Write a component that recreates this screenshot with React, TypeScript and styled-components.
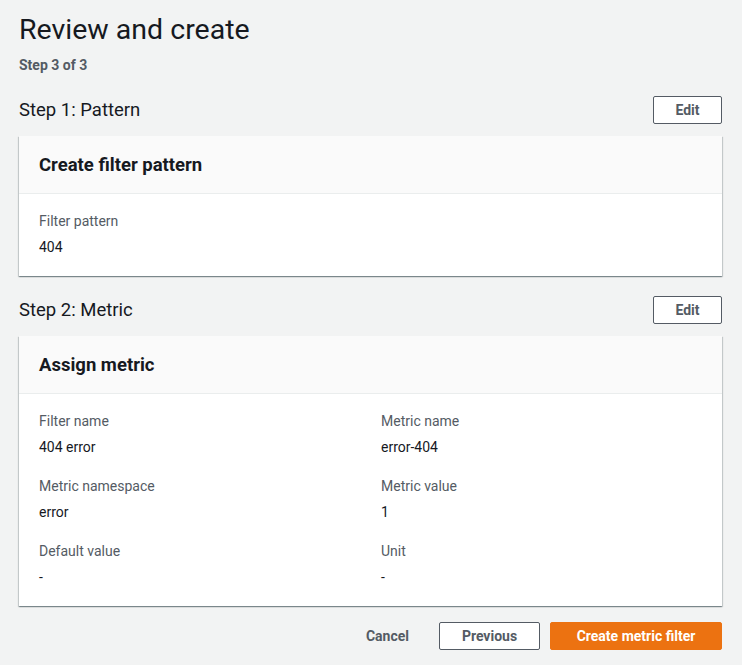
import React from "react";
import styled, { createGlobalStyle } from "styled-components";

const Global = createGlobalStyle`
  html, body { margin: 0; padding: 0; background: #f2f3f3; }
  body { font-family: Roboto, "Noto Sans", sans-serif; color: #16191f; }
  * { box-sizing: border-box; }
`;

const Page = styled.div`
  padding: 12px 20px 16px 19px;
  width: 742px;
`;

const Title = styled.h1`
  margin: 0;
  font-size: 28.5px;
  font-weight: 400;
  line-height: 36px;
  color: #16191f;
`;

const Sub = styled.div`
  margin-top: 8px;
  font-size: 14px;
  font-weight: 700;
  line-height: 18px;
  color: #545b64;
`;

const Section = styled.section`
  margin-top: 22px;
  & + & { margin-top: 20px; }
`;

const SectionHead = styled.div`
  display: flex;
  align-items: center;
  justify-content: space-between;
  height: 28px;
  margin-bottom: 12px;
`;

const SectionTitle = styled.h2`
  margin: 0;
  font-size: 18.5px;
  font-weight: 400;
  line-height: 22px;
`;

const Button = styled.button<{ $primary?: boolean; $link?: boolean; $w?: number }>`
  height: 28px;
  width: ${(p) => (p.$w ? `${p.$w}px` : "auto")};
  padding: ${(p) => (p.$w ? "0" : "0 19px")};
  border-radius: 2px;
  font-family: inherit;
  font-size: 14px;
  font-weight: 700;
  cursor: pointer;
  border: 1px solid ${(p) => (p.$primary ? "#ec7211" : p.$link ? "transparent" : "#545b64")};
  background: ${(p) => (p.$primary ? "#ec7211" : p.$link ? "transparent" : "#ffffff")};
  color: ${(p) => (p.$primary ? "#ffffff" : "#545b64")};
`;

const Card = styled.div`
  background: #ffffff;
  box-shadow: 0 1px 1px 0 rgba(0, 28, 36, 0.3), 1px 1px 1px 0 rgba(0, 28, 36, 0.15),
    -1px 1px 1px 0 rgba(0, 28, 36, 0.15);
`;

const CardHeader = styled.div`
  background: #fafafa;
  border-bottom: 1px solid #eaeded;
  height: 58px;
  padding: 0 20px;
  display: flex;
  align-items: center;
  font-size: 18.5px;
  font-weight: 700;
  color: #16191f;
`;

const CardBody = styled.div`
  padding: 17px 20px 19px;
`;

const Grid = styled.div`
  display: grid;
  grid-template-columns: 342px 1fr;
  row-gap: 19px;
`;

const Field = styled.div`
  display: flex;
  flex-direction: column;
  gap: 6px;
`;

const Label = styled.div`
  font-size: 14px;
  line-height: 20px;
  color: #545b64;
`;

const Value = styled.div`
  font-size: 14px;
  line-height: 20px;
  color: #16191f;
`;

const Footer = styled.div`
  margin-top: 16px;
  display: flex;
  justify-content: flex-end;
  align-items: center;
  gap: 10px;
`;

const metricFields: [string, string][] = [
  ["Filter name", "404 error"],
  ["Metric name", "error-404"],
  ["Metric namespace", "error"],
  ["Metric value", "1"],
  ["Default value", "-"],
  ["Unit", "-"],
];

export default function App() {
  return (
    <>
      <Global />
      <Page>
        <Title>Review and create</Title>
        <Sub>Step 3 of 3</Sub>
        <Section>
          <SectionHead>
            <SectionTitle>Step 1: Pattern</SectionTitle>
            <Button $w={69}>Edit</Button>
          </SectionHead>
          <Card>
            <CardHeader>Create filter pattern</CardHeader>
            <CardBody>
              <Field>
                <Label>Filter pattern</Label>
                <Value>404</Value>
              </Field>
            </CardBody>
          </Card>
        </Section>
        <Section>
          <SectionHead>
            <SectionTitle>Step 2: Metric</SectionTitle>
            <Button $w={69}>Edit</Button>
          </SectionHead>
          <Card>
            <CardHeader>Assign metric</CardHeader>
            <CardBody>
              <Grid>
                {metricFields.map(([l, v]) => (
                  <Field key={l}>
                    <Label>{l}</Label>
                    <Value>{v}</Value>
                  </Field>
                ))}
              </Grid>
            </CardBody>
          </Card>
        </Section>
        <Footer>
          <Button $link>Cancel</Button>
          <Button $w={101}>Previous</Button>
          <Button $primary $w={172}>Create metric filter</Button>
        </Footer>
      </Page>
    </>
  );
}
